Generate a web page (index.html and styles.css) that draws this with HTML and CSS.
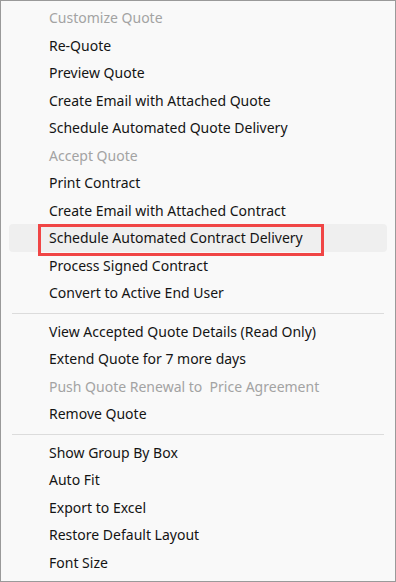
FILE: index.html
```html
<!DOCTYPE html>
<html lang="en">
<head>
    <meta charset="UTF-8">
    <meta name="viewport" content="width=device-width, initial-scale=1.0">
    <title>Quote Context Menu</title>
    <link rel="stylesheet" href="styles.css">
</head>
<body>
    <div class="menu">
        <div class="item disabled">Customize Quote</div>
        <div class="item">Re-Quote</div>
        <div class="item">Preview Quote</div>
        <div class="item">Create Email with Attached Quote</div>
        <div class="item">Schedule Automated Quote Delivery</div>
        <div class="item disabled">Accept Quote</div>
        <div class="item">Print Contract</div>
        <div class="item">Create Email with Attached Contract</div>
        <div class="item hover marked">Schedule Automated Contract Delivery</div>
        <div class="item">Process Signed Contract</div>
        <div class="item">Convert to Active End User</div>
        <div class="separator"></div>
        <div class="item">View Accepted Quote Details (Read Only)</div>
        <div class="item">Extend Quote for 7 more days</div>
        <div class="item disabled">Push Quote Renewal to&nbsp; Price Agreement</div>
        <div class="item">Remove Quote</div>
        <div class="separator"></div>
        <div class="item">Show Group By Box</div>
        <div class="item">Auto Fit</div>
        <div class="item">Export to Excel</div>
        <div class="item">Restore Default Layout</div>
        <div class="item">Font Size</div>
    </div>
</body>
</html>
```

FILE: styles.css
```css
*,
*::before,
*::after {
    margin: 0;
    padding: 0;
    box-sizing: border-box;
}

body {
    background: #fff;
    font-family: 'Noto Sans', 'Open Sans', sans-serif;
}

.menu {
    width: 396px;
    height: 582px;
    background: #f9f9f9;
    border: 1px solid #9a9a9a;
    padding-top: 3px;
    display: flex;
    flex-direction: column;
}

.item {
    position: relative;
    height: 27.5px;
    line-height: 27.5px;
    margin: 0 8px;
    padding-left: 40px;
    font-size: 14px;
    color: #141414;
    border-radius: 4px;
    white-space: nowrap;
}

.item.disabled {
    color: #a3a3a3;
}

.item.hover {
    background: #efefef;
}

.item.marked::after {
    content: '';
    position: absolute;
    left: 29px;
    top: 0;
    width: 286px;
    height: 32px;
    border: 3.5px solid #f04545;
}

.separator {
    height: 1px;
    margin: 6px 11px 4px;
    background: #dcdcdc;
}
```
